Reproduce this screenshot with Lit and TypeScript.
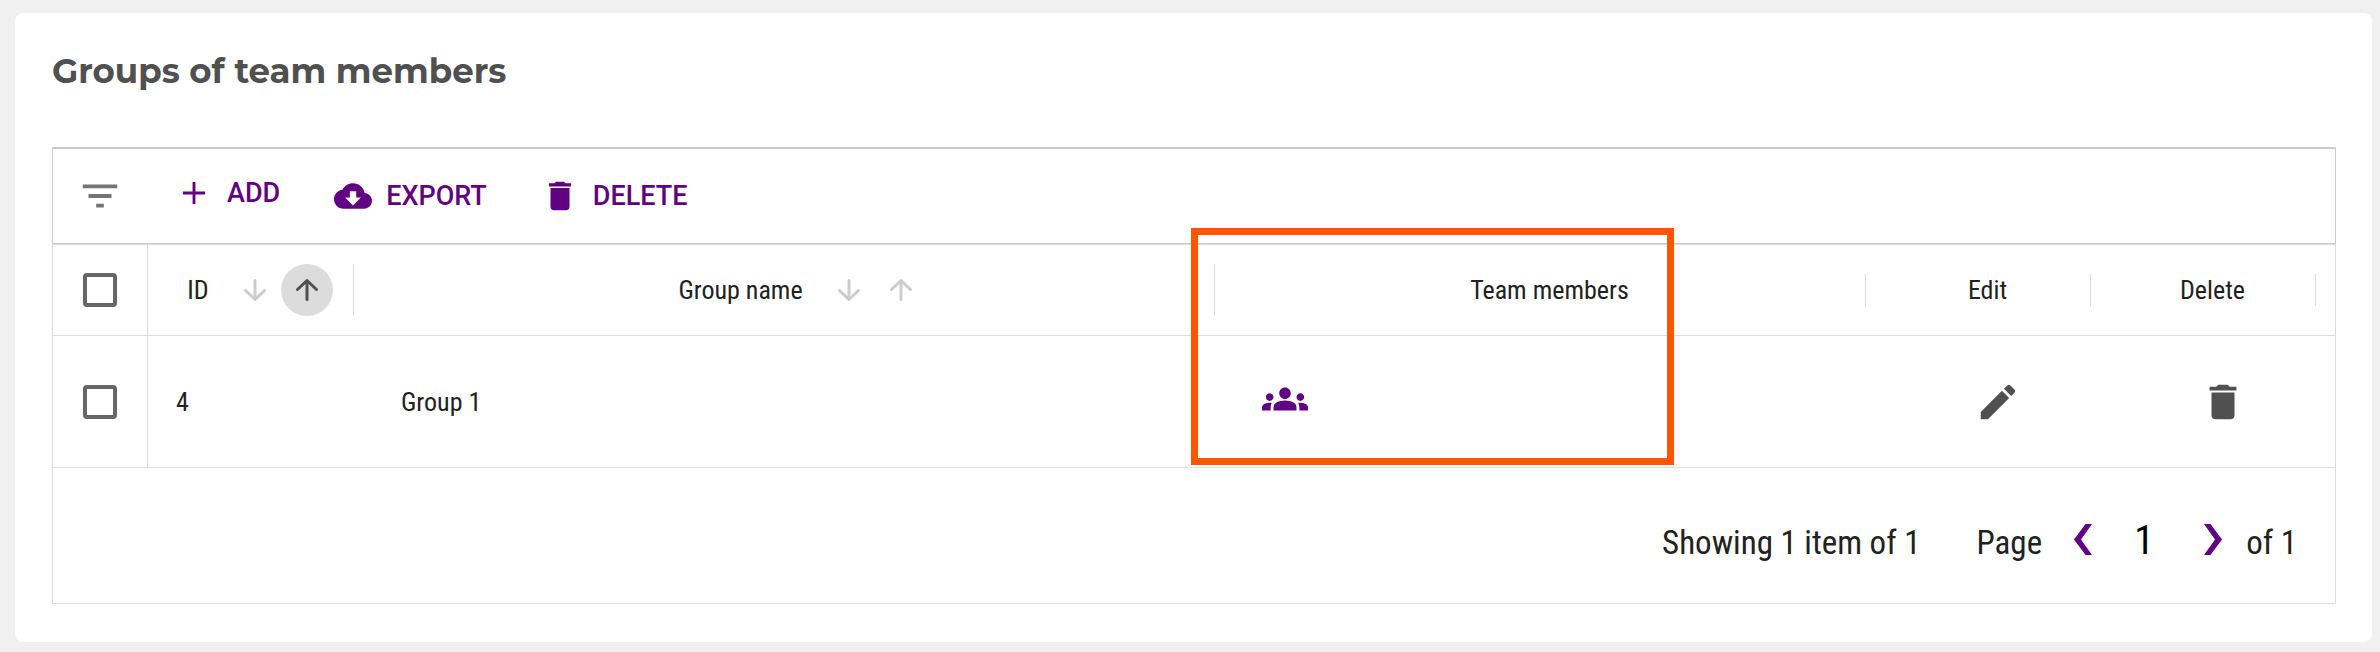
import { LitElement, html, css, svg } from "lit";
import { customElement, property, state } from "lit/decorators.js";

const ICONS: Record<string, string> = {
  filter: "M10 18h4v-2h-4v2zM3 6v2h18V6H3zm3 7h12v-2H6v2z",
  plus: "M19 12.9h-6.1V19h-1.8v-6.100H5v-1.8h6.100V5h1.8v6.100H19v1.8z",
  cloud:
    "M19.35 10.04C18.67 6.59 15.64 4 12 4 9.11 4 6.6 5.64 5.35 8.04 2.34 8.36 0 10.91 0 14c0 3.31 2.69 6 6 6h13c2.76 0 5-2.24 5-5 0-2.64-2.05-4.78-4.65-4.96zM17 13l-5 5-5-5h3V9h4v4h3z",
  trash: "M6 19c0 1.1.9 2 2 2h8c1.1 0 2-.9 2-2V7H6v12zM19 4h-3.5l-1-1h-5l-1 1H5v2h14V4z",
  pencil:
    "M3 17.25V21h3.75L17.81 9.94l-3.75-3.75L3 17.25zM20.71 7.04c.39-.39.39-1.02 0-1.41l-2.34-2.34c-.39-.39-1.02-.39-1.41 0l-1.83 1.83 3.75 3.75 1.83-1.83z",
  groups:
    "M12 12.75c1.63 0 3.07.39 4.24.9 1.08.48 1.76 1.56 1.76 2.73V18H6v-1.61c0-1.18.68-2.26 1.76-2.73 1.17-.52 2.61-.91 4.24-.91zM4 13c1.1 0 2-.9 2-2s-.9-2-2-2-2 .9-2 2 .9 2 2 2zm1.13 1.1c-.37-.06-.74-.1-1.13-.1-.99 0-1.93.21-2.78.58C.48 14.9 0 15.62 0 16.43V18h4.5v-1.61c0-.83.23-1.61.63-2.29zM20 13c1.1 0 2-.9 2-2s-.9-2-2-2-2 .9-2 2 .9 2 2 2zm4 3.43c0-.81-.48-1.53-1.22-1.85-.85-.37-1.79-.58-2.78-.58-.39 0-.76.04-1.13.1.4.68.63 1.46.63 2.29V18H24v-1.57zM12 6c1.66 0 3 1.34 3 3s-1.34 3-3 3-3-1.34-3-3 1.34-3 3-3z",
};

@customElement("ui-icon")
class UiIcon extends LitElement {
  @property() name = "";
  static styles = css`
    :host { display: block; flex: none; width: 46px; height: 46px; }
    svg { display: block; width: 100%; height: 100%; fill: currentColor; }
  `;
  render() {
    return html`<svg viewBox="0 0 24 24" aria-hidden="true">${svg`<path d=${ICONS[this.name]}></path>`}</svg>`;
  }
}

@customElement("sort-buttons")
class SortButtons extends LitElement {
  @property() column = "";
  @property() active = "";
  static styles = css`
    :host { display: flex; }
    .sort {
      display: grid; place-items: center; width: 52px; height: 52px; padding: 0;
      border: 0; border-radius: 50%; background: none; color: #cdcdcd; cursor: pointer;
    }
    .sort.on { background: #dcdcdc; color: #505050; }
    svg { width: 24px; height: 24px; fill: none; stroke: currentColor; stroke-width: 3; stroke-linecap: round; stroke-linejoin: round; }
  `;
  render() {
    return html`
      <button class="sort ${this.active === "down" ? "on" : ""}" aria-label="Sort ${this.column} descending">
        <svg viewBox="0 0 24 24"><path d="M12 2.5v19M2.500 12.500l9.500 9 9.500-9"></path></svg>
      </button>
      <button class="sort ${this.active === "up" ? "on" : ""}" aria-label="Sort ${this.column} ascending">
        <svg viewBox="0 0 24 24"><path d="M12 21.500v-19M2.500 11.500l9.500-9 9.500 9"></path></svg>
      </button>
    `;
  }
}

@customElement("app-root")
class AppRoot extends LitElement {
  @state() private rows = [{ id: 4, name: "Group 1" }];

  static styles = css`
    :host {
      display: block; box-sizing: border-box; min-height: 100vh; padding: 13px 8px 10px 15px;
      background: #f0f0f0; color: #212121;
      font: 400 26px/32px "Roboto Condensed", Roboto, sans-serif;
    }
    *, *::before { box-sizing: border-box; }
    button, input { font: inherit; color: inherit; }
    button { padding: 0; border: 0; background: none; cursor: pointer; }
    .card { padding: 36px 36px 38px 37px; border-radius: 8px; background: #fff; }
    .title { margin: 0; color: #505050; font: 700 34px/44px Montserrat, Inter, sans-serif; }
    .panel { margin-top: 54px; border: 1px solid #ddd; border-top: 0; }
    .toolbar {
      display: flex; align-items: center; height: 97px; margin: 0 -1px;
      border: 1px solid #ccc; border-top-width: 2px; color: #610082;
      font: 500 27px/32px Roboto, sans-serif;
    }
    .filter { display: grid; place-items: center; width: 94px; color: #757575; }
    .actions { display: flex; gap: 54px; padding-left: 28px; }
    .action { display: flex; align-items: center; gap: 14px; color: inherit; text-decoration: none; }
    .action ui-icon { width: 38px; height: 38px; }
    .action.add { padding-bottom: 6px; }
    .grid { display: block; border-top: 1px solid #ddd; }
    .grid thead, .grid tbody { display: block; }
    .line {
      display: grid; border-bottom: 1px solid #ddd;
      grid-template-columns: 95px 206px 861fr 651fr 225px 225px 19px;
    }
    .head { height: 91px; }
    .body { height: 132px; }
    th, td { display: flex; align-items: center; padding: 0; font-weight: 400; }
    th { position: relative; justify-content: center; gap: 20px; padding-left: 18px; }
    .rule::after {
      content: ""; position: absolute; right: 0; top: calc(50% - 16px);
      width: 1px; height: 32px; background: #ddd;
    }
    .rule.tall::after { top: calc(50% - 26px); height: 52px; }
    .wide { padding-left: 36px; }
    .check { justify-content: center; padding: 0; border-right: 1px solid #ddd; }
    .check input {
      appearance: none; width: 34px; height: 34px; margin: 0;
      border: 4px solid #666; border-radius: 4px; background: #fff;
    }
    .id { padding-left: 28px; }
    .cell { padding-left: 47px; }
    .team { color: #610082; }
    .team button { margin-bottom: 6px; }
    .tool { justify-content: center; padding-left: 38px; color: #505050; }
    .spot {
      position: absolute; z-index: 1; top: -17px; left: -24px; right: 192px; height: 237px;
      border: 7px solid #f50; pointer-events: none;
    }
    .footer {
      display: flex; align-items: center; justify-content: flex-end; height: 135px;
      padding: 14px 38px 0 0; font-size: 33px; line-height: 40px;
    }
    .pager { display: flex; align-items: center; margin-left: 56px; }
    .chev { margin: 0 22px 6px 32px; color: #610082; }
    .chev.next { margin: 0 24px 6px 30px; }
    .chev svg { display: block; width: 18px; height: 31px; fill: currentColor; }
    .num {
      width: 60px; height: 48px; margin-bottom: 4px; padding: 0; border: 0; outline: 0; background: none;
      color: #000; font-size: 40px; line-height: 48px; text-align: center;
    }
  `;

  render() {
    return html`
      <main class="card">
        <h1 class="title">Groups of team members</h1>
        <section class="panel">
          <div class="toolbar">
            <button class="filter" aria-label="Filter"><ui-icon name="filter"></ui-icon></button>
            <div class="actions">
              <a class="action add" href="#add"><ui-icon name="plus"></ui-icon>ADD</a>
              <button class="action"><ui-icon name="cloud"></ui-icon>EXPORT</button>
              <button class="action"><ui-icon name="trash"></ui-icon>DELETE</button>
            </div>
          </div>
          <table class="grid">
            <thead>
              <tr class="line head">
                <th class="check"><input type="checkbox" aria-label="Select all groups" /></th>
                <th class="rule tall">ID<sort-buttons column="ID" active="up"></sort-buttons></th>
                <th class="rule tall wide">Group name<sort-buttons column="Group name"></sort-buttons></th>
                <th class="rule">Team members<span class="spot"></span></th>
                <th class="rule">Edit</th>
                <th class="rule">Delete</th>
              </tr>
            </thead>
            <tbody>
              ${this.rows.map(
                (r) => html`<tr class="line body">
                  <td class="check"><input type="checkbox" aria-label="Select ${r.name}" /></td>
                  <td class="id">${r.id}</td>
                  <td class="cell">${r.name}</td>
                  <td class="cell team"><button aria-label="Team members"><ui-icon name="groups"></ui-icon></button></td>
                  <td class="tool"><button aria-label="Edit"><ui-icon name="pencil"></ui-icon></button></td>
                  <td class="tool"><button aria-label="Delete"><ui-icon name="trash"></ui-icon></button></td>
                </tr>`
              )}
            </tbody>
          </table>
          <footer class="footer">
            <span>Showing 1 item of 1</span>
            <div class="pager">
              <label for="page">Page</label>
              <button class="chev" aria-label="Previous page">
                <svg viewBox="0 0 18 31"><path d="M11.500 0H18L7 15.500 18 31h-6.500L0 15.500z"></path></svg>
              </button>
              <input class="num" id="page" type="text" value="1" />
              <button class="chev next" aria-label="Next page">
                <svg viewBox="0 0 18 31"><path d="M6.500 0H0l11 15.500L0 31h6.500L18 15.500z"></path></svg>
              </button>
              <span>of 1</span>
            </div>
          </footer>
        </section>
      </main>
    `;
  }
}
